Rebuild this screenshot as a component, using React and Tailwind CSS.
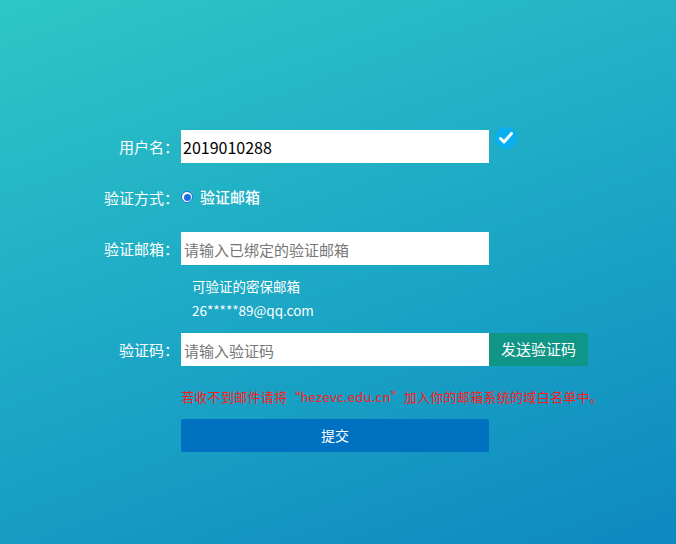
import React from 'react';

const font = { fontFamily: '"Microsoft YaHei", "Noto Sans CJK SC", sans-serif' };

const Label = ({ children }) => (
  <div className="w-[91px] shrink-0 text-right text-[15px] text-white pr-[2px] leading-none">{children}</div>
);

export default function App() {
  return (
    <div
      className="w-[676px] h-[544px] bg-[linear-gradient(160deg,#2ec6c6_0%,#1ca8c6_50%,#0e88c0_100%)]"
      style={font}
    >
      <div className="flex flex-col pt-[130px] pl-[90px]">
        <div className="flex items-center h-[33px]">
          <Label>用户名：</Label>
          <input
            className="w-[308px] h-[33px] bg-white px-[2px] text-[16px] text-black outline-none"
            defaultValue="2019010288"
          />
          <div className="self-start -mt-[3px] ml-[6px] w-[22px] h-[22px] rounded-full bg-[#0aaff0] flex items-center justify-center">
            <svg width="14" height="12" viewBox="0 0 14 12">
              <path d="M1.5 6.5 L5 10 L12.5 1.5" fill="none" stroke="white" strokeWidth="3" strokeLinecap="round" strokeLinejoin="round" />
            </svg>
          </div>
        </div>

        <div className="flex items-center h-[20px] mt-[24px]">
          <Label>验证方式：</Label>
          <span className="w-[12px] h-[12px] rounded-full border-[1.5px] border-[#1a6fe0] bg-white flex items-center justify-center">
            <span className="w-[7px] h-[7px] rounded-full bg-[#1a6fe0]" />
          </span>
          <span className="ml-[7px] text-[15px] font-medium text-white">验证邮箱</span>
        </div>

        <div className="flex items-center h-[33px] mt-[25px]">
          <Label>验证邮箱：</Label>
          <input
            className="w-[308px] h-[33px] bg-white px-[3px] text-[16px] text-black outline-none placeholder:text-[15px] placeholder:text-[#777]"
            placeholder="请输入已绑定的验证邮箱"
          />
        </div>

        <div className="flex flex-col ml-[102px] mt-[9px] text-[13.5px] text-white leading-[24px]">
          <span>可验证的密保邮箱</span>
          <span>26*****89@qq.com</span>
        </div>

        <div className="flex items-center h-[33px] mt-[11px]">
          <Label>验证码：</Label>
          <input
            className="w-[308px] h-[33px] bg-white px-[3px] text-[16px] text-black outline-none placeholder:text-[15px] placeholder:text-[#777]"
            placeholder="请输入验证码"
          />
          <button className="w-[99px] h-[33px] bg-[#0f9687] text-white text-[15px] rounded-r-[2px]">发送验证码</button>
        </div>

        <div className="ml-[91px] mt-[21px] h-[20px] leading-[20px] text-[13px] tracking-[0.3px] text-[#ff1a1a] whitespace-nowrap">
          若收不到邮件请将<span className="inline-block w-[13px] text-right">“</span>hezevc.edu.cn<span className="inline-block w-[13px]">”</span>加入你的邮箱系统的域白名单中。
        </div>

        <button className="ml-[91px] mt-[12px] w-[308px] h-[33px] bg-[#0071c1] rounded-[2px] text-white text-[14px]">
          提交
        </button>
      </div>
    </div>
  );
}
